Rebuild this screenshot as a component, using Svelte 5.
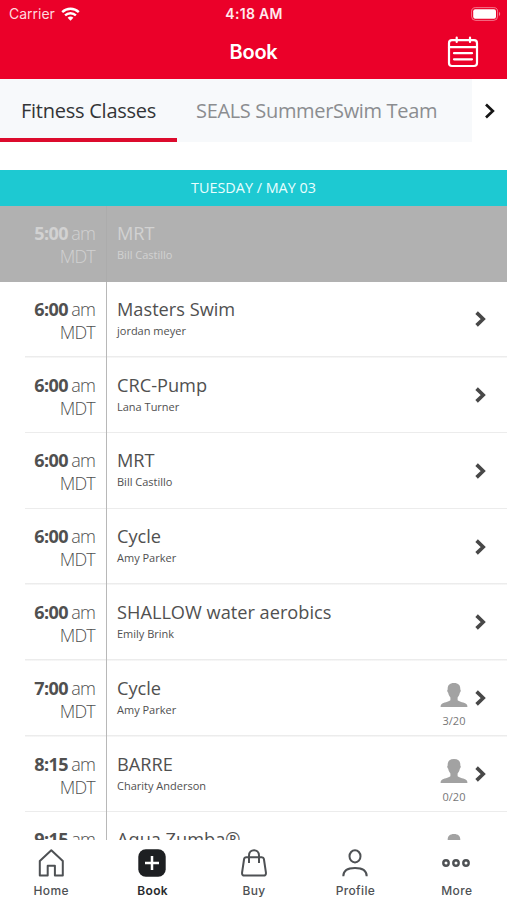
<script lang="ts">
  interface ClassItem {
    time: string;
    zone?: string;
    name: string;
    coach?: string;
    spots?: string;
    past?: boolean;
  }

  const tabs = ["Fitness Classes", "SEALS SummerSwim Team"];
  const navItems = ["Home", "Book", "Buy", "Profile", "More"];

  const classes: ClassItem[] = [
    { time: "5:00", zone: "MDT", name: "MRT", coach: "Bill Castillo", past: true },
    { time: "6:00", zone: "MDT", name: "Masters Swim", coach: "jordan meyer" },
    { time: "6:00", zone: "MDT", name: "CRC-Pump", coach: "Lana Turner" },
    { time: "6:00", zone: "MDT", name: "MRT", coach: "Bill Castillo" },
    { time: "6:00", zone: "MDT", name: "Cycle", coach: "Amy Parker" },
    { time: "6:00", zone: "MDT", name: "SHALLOW water aerobics", coach: "Emily Brink" },
    { time: "7:00", zone: "MDT", name: "Cycle", coach: "Amy Parker", spots: "3/20" },
    { time: "8:15", zone: "MDT", name: "BARRE", coach: "Charity Anderson", spots: "0/20" },
    { time: "9:15", name: "Aqua Zumba®", spots: "" },
  ];

  let activeTab = $state("Fitness Classes");
  let activeNav = $state("Book");
</script>

<div class="app">
  <header class="header">
    <div class="status">
      <div class="status__carrier">
        <span>Carrier</span>
        <svg width="19" height="14" viewBox="0 0 19 14" fill="none" stroke="#fff" stroke-width="2.4">
          <path d="M1.2 5.1C5.9 .6 13.1 .6 17.8 5.1" />
          <path d="M4.1 8.4C7.1 5.5 11.9 5.5 14.9 8.4" />
          <path d="M6.6 10.8C8.2 9.2 10.8 9.2 12.4 10.8L9.5 13.8Z" fill="#fff" stroke="none" />
        </svg>
      </div>
      <span class="status__time">4:18 AM</span>
      <svg class="status__battery" width="30" height="14" viewBox="0 0 30 14">
        <rect x=".6" y=".6" width="26" height="12.8" rx="4" fill="none" stroke="#fff" stroke-opacity=".45" />
        <rect x="2.2" y="2.3" width="22.8" height="9.4" rx="2" fill="#fff" />
        <path d="M28 4.8Q30.4 7 28 9.2Z" fill="#fff" fill-opacity=".5" />
      </svg>
    </div>
    <div class="title-bar">
      <h1>Book</h1>
      <button class="title-bar__calendar" aria-label="Calendar">
        <svg width="32" height="32" viewBox="0 0 32 32" fill="none" stroke="#fff" stroke-width="2.2" stroke-linecap="round">
          <rect x="2" y="4.2" width="28" height="25.8" rx="3" />
          <path d="M2 11.2H30M9.7 1.5V6M23 1.5V6M7 17.2H25M7 23.3H25" />
        </svg>
      </button>
    </div>
  </header>

  <div class="tabs">
    {#each tabs as tab}
      <button class="tab" class:tab--active={tab === activeTab} onclick={() => (activeTab = tab)}>{tab}</button>
    {/each}
    <button class="tabs__next" aria-label="Next">
      <svg width="12" height="16" viewBox="0 0 12 16" fill="none" stroke="#151515" stroke-width="2.7">
        <path d="M2 1.6L8.8 8L2 14.4" />
      </svg>
    </button>
  </div>

  <div class="date">TUESDAY / MAY 03</div>

  <main class="list">
    {#each classes as item}
      <div class="row" class:row--past={item.past}>
        <div class="row__time">
          <div><b>{item.time}</b><span>am</span></div>
          {#if item.zone}
            <div>{item.zone}</div>
          {/if}
        </div>
        <div class="row__info">
          <div class="row__name">{item.name}</div>
          {#if item.coach}
            <div class="row__coach">{item.coach}</div>
          {/if}
        </div>
        {#if item.spots !== undefined}
          <div class="row__spots">
            <svg width="28" height="24" viewBox="0 0 28 24" fill="#a2a2a2">
              <path d="M14 0C9.6 0 7.4 2.3 7.7 6.5C6.9 6.9 7.2 9 8.2 9.8C8.5 12 9.5 13.3 10.4 14.4V17.3C8.6 19 3.5 19.5 1.5 21.2C.7 21.9 .6 22.8 .6 24H27.4C27.4 22.8 27.3 21.9 26.5 21.2C24.5 19.5 19.4 19 17.6 17.3V14.4C18.5 13.3 19.5 12 19.8 9.8C20.8 9 21.1 6.9 20.3 6.5C20.6 2.3 18.4 0 14 0Z" />
            </svg>
            <span>{item.spots}</span>
          </div>
        {/if}
        {#if !item.past}
          <svg class="row__arrow" width="12" height="16" viewBox="0 0 12 16" fill="none" stroke="#484848" stroke-width="3.6">
            <path d="M1.6 1.6L8.2 8L1.6 14.4" />
          </svg>
        {/if}
      </div>
    {/each}
  </main>

  <nav class="nav">
    {#each navItems as label}
      <button class="nav__item" class:nav__item--active={label === activeNav} onclick={() => (activeNav = label)}>
        <svg width="30" height="30" viewBox="0 0 30 30" fill="none" stroke="currentColor" stroke-width="2">
          {#if label === "Home"}
            <path d="M3.8 13L15.3 2.2L26.8 13V27.6H18.9V17.8H11.7V27.6H3.8Z" stroke-linejoin="round" />
          {:else if label === "Book"}
            <rect x="1.3" y="1.3" width="27.4" height="27.4" rx="7.5" fill="#1d1f22" stroke="none" />
            <path d="M15 8V22M8 15H22" stroke="#fff" stroke-width="2.5" />
          {:else if label === "Buy"}
            <path d="M7.2 9.2H22.8Q24.6 9.2 24.9 11L26.9 24.4Q27.3 27.6 24.4 27.6H5.6Q2.7 27.6 3.1 24.4L5.1 11Q5.4 9.2 7.2 9.2Z" />
            <path d="M10 15V7.5C10 .5 20 .5 20 7.5V15" />
          {:else if label === "Profile"}
            <ellipse cx="15" cy="8.3" rx="5.5" ry="6.1" />
            <path d="M3.3 28.3C3.3 22.3 7.8 20 15 20S26.7 22.3 26.7 28.3" />
          {:else}
            <g stroke-width="2.4">
              <circle cx="5" cy="15" r="2.7" />
              <circle cx="15" cy="15" r="2.7" />
              <circle cx="25" cy="15" r="2.7" />
            </g>
          {/if}
        </svg>
        <span>{label}</span>
      </button>
    {/each}
  </nav>
</div>

<style>
  :global(body) {
    margin: 0;
  }

  .app {
    display: flex;
    flex-direction: column;
    width: 507px;
    height: 900px;
    overflow: hidden;
    background: #fff;
    color: #505050;
    font-family: "Open Sans", "Noto Sans", sans-serif;
  }

  button {
    padding: 0;
    border: none;
    background: none;
    font: inherit;
    color: inherit;
  }

  svg {
    display: block;
  }

  .header {
    flex: none;
    height: 79px;
    background: #eb0029;
    color: #fff;
    font-family: Inter, sans-serif;
  }

  .status {
    display: grid;
    grid-template-columns: 1fr auto 1fr;
    align-items: center;
    height: 27px;
    padding: 0 6px 0 9px;
    font-size: 14px;
  }

  .status__carrier {
    display: flex;
    align-items: center;
    gap: 6px;
    color: #ffd9df;
  }

  .status__time {
    margin-right: 2px;
    font-weight: 600;
    letter-spacing: 0.3px;
    color: #ffe9ed;
  }

  .status__battery {
    justify-self: end;
  }

  .title-bar {
    display: grid;
    grid-template-columns: 1fr auto 1fr;
    align-items: center;
    height: 50px;
    padding: 0 28px;
  }

  h1 {
    grid-column: 2;
    margin: 0;
    font-size: 20px;
    font-weight: 600;
    letter-spacing: -0.2px;
  }

  .title-bar__calendar {
    justify-self: end;
  }

  .tabs {
    display: flex;
    flex: none;
    height: 63px;
    margin-bottom: 28px;
  }

  .tab {
    box-sizing: border-box;
    width: 295px;
    padding: 4px 0 0 19px;
    border-bottom: 4px solid transparent;
    background: #f7f9fb;
    font-size: 20px;
    letter-spacing: -0.33px;
    text-align: left;
    white-space: nowrap;
    color: #8b8d90;
  }

  .tab--active {
    width: 177px;
    padding-left: 21px;
    border-bottom-color: #dc0b2d;
    letter-spacing: -0.25px;
    color: #333537;
  }

  .tabs__next {
    display: flex;
    flex: 1;
    align-items: center;
    justify-content: center;
  }

  .date {
    flex: none;
    height: 36px;
    background: #1dc9d2;
    font-size: 14.4px;
    line-height: 36px;
    text-align: center;
    color: #e9feff;
  }

  .list {
    flex: 1;
    min-height: 0;
    overflow: hidden;
  }

  .row {
    display: flex;
    box-sizing: border-box;
    height: 75.8px;
    background: linear-gradient(#ececec, #ececec) 25px 100% / 100% 1.5px no-repeat;
  }

  .row--past {
    background: #b1b1b1;
    color: #d2d2d2;
  }

  .row__time {
    box-sizing: border-box;
    flex: none;
    width: 107px;
    padding: 16px 11px 0 0;
    border-right: 1px solid #b8b8b8;
    font-size: 18px;
    font-weight: 300;
    line-height: 23px;
    letter-spacing: -0.8px;
    text-align: right;
  }

  .row--past .row__time {
    border-right-color: #acacac;
  }

  .row__time b {
    margin-right: 3px;
    font-weight: 700;
    letter-spacing: -0.5px;
  }

  .row__info {
    flex: 1;
    padding: 16px 0 0 10px;
  }

  .row__name {
    font-size: 18.2px;
    line-height: 23px;
  }

  .row__coach {
    font-size: 11px;
    line-height: 20px;
  }

  .row__spots {
    display: flex;
    flex-direction: column;
    align-items: center;
    gap: 6px;
    padding: 22px 7px 0 0;
    font-size: 11px;
    line-height: 16px;
    color: #777;
  }

  .row__arrow {
    align-self: center;
    margin: 0 20px 1px 0;
  }

  .nav {
    display: flex;
    flex: none;
    height: 60px;
    background: #fff;
    font-family: Inter, sans-serif;
  }

  .nav__item {
    display: flex;
    flex: 1;
    flex-direction: column;
    align-items: center;
    padding-top: 8px;
    font-size: 12px;
    font-weight: 500;
    line-height: 15px;
    letter-spacing: 0.35px;
    color: #4e5154;
  }

  .nav__item span {
    margin: 5px 0 0 1px;
  }

  .nav__item--active {
    font-weight: 600;
    color: #292b2e;
  }
</style>
